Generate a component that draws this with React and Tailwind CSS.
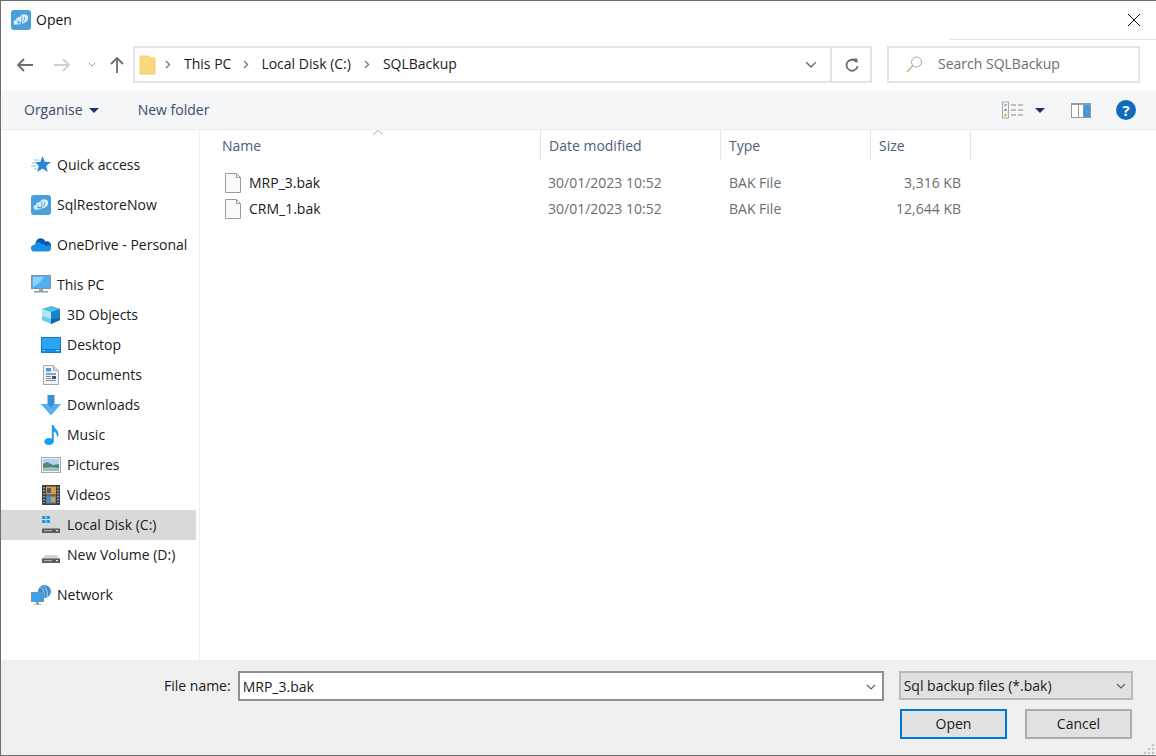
import React from "react";

const Logo = ({ s = 20 }) => (
  <svg width={s} height={s} viewBox="0 0 20 20" className="shrink-0">
    <rect width="20" height="20" rx="3" fill="#4a9fdc" />
    <path d="M3 14c-1-2 0-4 2-4 0-2 2-3 4-3 1-2 3-3 5-2.500 2 0 3.500 1.500 3 3.500 0 2-1 3.500-2.500 4-1 1.500-2.500 1.500-4 1-1.500 1.500-3 2-4 1.500-1.500 0-3 .5-3.500-.5z" fill="#dceffb" />
    <path d="M7 10l1 4.500M11 6.500l-.5 6M14 7l-1.500 5M6 12.500h5" stroke="#4a9fdc" strokeWidth="0.900" fill="none" />
  </svg>
);
const Star = () => (
  <svg width="20" height="20" viewBox="0 0 20 20" className="shrink-0">
    <path d="M11.500 1l2.200 5.700 6.300.3-4.900 3.900 1.700 6.100-5.300-3.500-5.300 3.500 1.700-6.100L4 7h5.300z" fill="#2a85d8" />
    <path d="M3 5h5M1 8h5M0 11h5M3 14h4" stroke="#8cc4ee" strokeWidth="1" />
  </svg>
);
const Cloud = () => (
  <svg width="20" height="14" viewBox="0 0 20 14" className="shrink-0">
    <path d="M5 7a5 5 0 0 1 9.500-3.500A4 4 0 0 1 19.500 9L10 9z" fill="#0a56ad" />
    <path d="M3.500 13.500a3.300 3.300 0 0 1-.4-6.600A4.800 4.800 0 0 1 11 6a3.500 3.500 0 0 1 4 2.500 2.800 2.800 0 0 1 5 2.500c-.4 1.500-1.500 2.500-3 2.500z" fill="#1c8fe3" />
  </svg>
);
const Monitor = ({ s = 20 }) => (
  <svg width={s} height={s} viewBox="0 0 20 20" className="shrink-0">
    <rect x="0.500" y="0.500" width="19" height="13" fill="#4fb0f2" stroke="#7f93a3" />
    <path d="M2 2h11L8 8l-6 4z" fill="#8fd0fa" />
    <rect x="8" y="14" width="4" height="2" fill="#9aa5ae" />
    <rect x="3" y="16" width="14" height="1.500" fill="#8e9aa4" />
  </svg>
);
const Cube = () => (
  <svg width="20" height="20" viewBox="0 0 20 20" className="shrink-0">
    <path d="M10 1l9 3v11l-9 4z" fill="#1b84c8" />
    <path d="M10 1L1 4v11l9 4z" fill="#aee8f8" />
    <path d="M1 4l9 3 9-3-9-3z" fill="#54bfe9" />
    <path d="M10 14l9-1v2l-9 4z" fill="#0d65a2" />
    <path d="M1 11l9 3v5l-9-4z" fill="#6dcdea" />
  </svg>
);
const Desktop = () => (
  <svg width="20" height="16" viewBox="0 0 20 16" className="shrink-0">
    <rect width="20" height="16" fill="#1179cf" />
    <rect x="1" y="1" width="18" height="11" fill="#2ba4f5" />
    <rect x="1" y="13" width="18" height="2" fill="#1a8ee4" />
    <rect x="15" y="13" width="3" height="1" fill="#cfe8f8" />
    <rect x="2" y="13" width="2" height="1" fill="#9fd4f7" />
  </svg>
);
const Docs = () => (
  <svg width="16" height="20" viewBox="0 0 16 20" className="shrink-0">
    <path d="M.5.500h10l5 5v14H.500z" fill="#f2f4f6" stroke="#a4a9ae" />
    <path d="M10.500.500v5h5" fill="#d8dcdf" stroke="#a4a9ae" />
    <path d="M3 3h5v3.500H3z" fill="#4f9bdc" />
    <path d="M3 9h10" stroke="#3a94dd" strokeWidth="1.500" />
    <path d="M3 11.500h5M3 13.500h5M3 15.500h10" stroke="#7e8a95" />
    <rect x="9" y="11" width="4" height="3" fill="#4a5560" />
  </svg>
);
const Down = () => (
  <svg width="20" height="20" viewBox="0 0 20 20" className="shrink-0">
    <path d="M6.500 0h7v9H20L10 20 0 9h6.500z" fill="#3a8fdb" />
    <path d="M10 20L0 9h6.500L10 13l3.500-4H20z" fill="#56aef0" />
  </svg>
);
const Note = () => (
  <svg width="15" height="20" viewBox="0 0 15 20" className="shrink-0">
    <ellipse cx="5" cy="16.500" rx="4.700" ry="3.500" fill="#1c9bef" />
    <path d="M7.800 0h2c.3 4 5 4.500 4.700 10l-1.500 2.500c.5-3-1.500-5.500-3.200-6V17H7.800z" fill="#1c9bef" />
  </svg>
);
const Pics = () => (
  <svg width="20" height="16" viewBox="0 0 20 16" className="shrink-0">
    <rect x="0.500" y="0.500" width="19" height="15" fill="#eef0f1" stroke="#a5abb0" />
    <rect x="2" y="2" width="16" height="12" fill="#aed6ef" />
    <path d="M2 7l4-2 6 3 6-1v7H2z" fill="#4f857d" />
    <path d="M2 11l8-1 8 1v3H2z" fill="#9ec3b5" />
  </svg>
);
const Film = () => (
  <svg width="18" height="20" viewBox="0 0 18 20" className="shrink-0">
    <rect width="18" height="20" fill="#3c4043" />
    <rect x="4" y="1.500" width="10" height="8" fill="#e09a3a" />
    <rect x="4" y="10.500" width="10" height="8" fill="#4b8ec0" />
    <rect x="5" y="3" width="4" height="5" fill="#38628a" />
    <rect x="9" y="12" width="4" height="5" fill="#dc9b3d" />
    <path d="M2 2v16M16 2v16" stroke="#aeb4b8" strokeWidth="1.500" strokeDasharray="1.500 1.500" />
  </svg>
);
const Drive = ({ win }) => (
  <svg width="18" height="20" viewBox="0 0 18 20" className="shrink-0">
    {win && (
      <g fill="#1a9bf0">
        <rect x="0" y="1" width="3.500" height="3" />
        <rect x="4.500" y="1" width="3.500" height="3" />
        <rect x="0" y="5" width="3.500" height="3" />
        <rect x="4.500" y="5" width="3.500" height="3" />
      </g>
    )}
    <path d="M3 10h12l3 4H0z" fill="#d2d5d7" />
    <rect x="0" y="13.500" width="18" height="4.500" rx="0.500" fill="#565b5f" />
    <rect x="2" y="15" width="8" height="1.200" fill="#a8adb0" />
    <rect x="14" y="15" width="2" height="1.200" fill="#e7ebee" />
  </svg>
);
const Net = () => (
  <svg width="21" height="21" viewBox="0 0 21 21" className="shrink-0">
    <circle cx="13.500" cy="6.500" r="6.500" fill="#3f8fd0" />
    <path d="M9 2c4 1 5 8 3 11M13 1c3 3 4 8 3 11" stroke="#b6dbf3" fill="none" />
    <rect x="0.500" y="7.500" width="12" height="9" fill="#35a5ef" stroke="#7892a6" />
    <rect x="5" y="17" width="3" height="2" fill="#8ea0ad" />
    <rect x="3" y="19" width="7" height="1" fill="#a9b5bd" />
  </svg>
);
const FileIcon = () => (
  <svg width="16" height="20" viewBox="0 0 16 20" className="shrink-0">
    <path d="M.5.500h11l4 4v15H.500z" fill="#fbfbfb" stroke="#9a9a9a" />
    <path d="M11.500.500v4h4" fill="none" stroke="#9a9a9a" />
  </svg>
);
const Chev = ({ c = "#6d6d6d", w = 12 }) => (
  <svg width={w} height={w * 0.6} viewBox="0 0 10 6" className="shrink-0">
    <path d="M1 1l4 4 4-4" fill="none" stroke={c} strokeWidth="1.200" />
  </svg>
);
const Crumb = () => (
  <svg width="6" height="9" viewBox="0 0 6 9" className="shrink-0">
    <path d="M1 1l3.500 3.500L1 8" fill="none" stroke="#7a7a7a" strokeWidth="1.400" />
  </svg>
);
const Tri = () => (
  <svg width="10" height="5" viewBox="0 0 10 5" className="shrink-0">
    <path d="M0 0h10L5 5z" fill="#1e3560" />
  </svg>
);

const Nav = ({ icon, label, indent, selected }) => (
  <div className={`flex h-[30px] w-[195px] items-center ${indent ? "pl-[40px]" : "pl-[30px]"} ${selected ? "bg-[#d9d9d9]" : ""}`}>
    <div className="flex w-[20px] shrink-0 justify-center">{icon}</div>
    <span className="ml-[6px] whitespace-nowrap text-[#1a1a1a]">{label}</span>
  </div>
);

const Row = ({ name, size }) => (
  <div className="flex h-[26px] items-center text-[#6d6d6d]">
    <div className="flex w-[327px] items-center pl-[11px]">
      <FileIcon />
      <span className="ml-[8px] text-[#1a1a1a]">{name}</span>
    </div>
    <div className="w-[181px] pl-[7px]">30/01/2023 10:52</div>
    <div className="w-[150px] pl-[7px]">BAK File</div>
    <div className="w-[89px] text-right">{size}</div>
  </div>
);

const Head = ({ w, children }) => (
  <div className={`flex h-[31px] items-center border-r border-[#e5e5e5] pl-[8px] text-[#4c607a] ${w}`}>{children}</div>
);

export default function App() {
  return (
    <div
      className="flex h-[756px] w-[1156px] flex-col overflow-hidden border-y border-l border-[#6e6e6e] bg-white text-[14px] leading-none"
      style={{ fontFamily: '"Open Sans", "Noto Sans", sans-serif' }}
    >
      {/* title */}
      <div className="flex h-[38px] shrink-0 items-center">
        <div className="ml-[10px]"><Logo /></div>
        <span className="ml-[5px] text-[#111]">Open</span>
        <svg width="12" height="12" viewBox="0 0 12 12" className="ml-auto mr-[16px]">
          <path d="M0 0l12 12M12 0L0 12" stroke="#111" strokeWidth="1" />
        </svg>
      </div>
      <div className="ml-auto h-px w-[206px] shrink-0 bg-[#e5e5e5]" />

      {/* address row */}
      <div className="flex h-[51px] shrink-0 items-start pt-[6px]">
        <div className="flex h-[37px] w-[132px] items-center">
          <svg width="16" height="14" viewBox="0 0 16 14" className="ml-[16px]">
            <path d="M7 1L1 7l6 6M1 7h15" fill="none" stroke="#6d6d6d" strokeWidth="1.800" />
          </svg>
          <svg width="16" height="14" viewBox="0 0 16 14" className="ml-[21px]">
            <path d="M9 1l6 6-6 6M15 7H0" fill="none" stroke="#d0d0d0" strokeWidth="1.800" />
          </svg>
          <div className="ml-[18px]"><Chev c="#9a9a9a" w={8} /></div>
          <svg width="14" height="16" viewBox="0 0 14 16" className="ml-[14px]">
            <path d="M1 7l6-6 6 6M7 1v15" fill="none" stroke="#6d6d6d" strokeWidth="1.800" />
          </svg>
        </div>
        <div className="flex h-[37px] w-[739px] items-center border-2 border-[#e4e4e4] text-[#1a1a1a]">
          <svg width="17" height="20" viewBox="0 0 17 20" className="ml-[4px]">
            <path d="M1 1h9l1 2h5v16H1z" fill="#fbd87f" stroke="#f0c860" strokeWidth="0.800" />
          </svg>
          <div className="ml-[9px]"><Crumb /></div>
          <span className="ml-[13px] pb-[2px]">This PC</span>
          <div className="ml-[12px]"><Crumb /></div>
          <span className="ml-[12px] pb-[2px]">Local Disk (C:)</span>
          <div className="ml-[13px]"><Crumb /></div>
          <span className="ml-[13px] pb-[2px]">SQLBackup</span>
          <div className="ml-auto flex items-center self-stretch">
            <Chev />
            <div className="ml-[13px] flex h-full w-[40px] items-center justify-center border-l-2 border-[#e4e4e4] pl-[2px]">
              <svg width="14" height="15" viewBox="0 0 14 15">
                <path d="M11.500 5A5.500 5.500 0 1 0 12.500 9" fill="none" stroke="#6d6d6d" strokeWidth="1.800" />
                <path d="M7 1.500h5.500v4.500z" fill="#6d6d6d" />
              </svg>
            </div>
          </div>
        </div>
        <div className="ml-[15px] flex h-[37px] w-[253px] items-center border-2 border-[#e4e4e4] text-[#6d6d6d]">
          <svg width="17" height="17" viewBox="0 0 17 17" className="ml-[17px]">
            <circle cx="10.500" cy="6" r="5" fill="none" stroke="#a8a8a8" strokeWidth="1" />
            <path d="M7 9.500L1 16" stroke="#d0b078" strokeWidth="1.500" />
          </svg>
          <span className="ml-[15px] pb-[2px]">Search SQLBackup</span>
        </div>
      </div>

      {/* toolbar */}
      <div className="flex h-[39px] shrink-0 items-center border-b border-[#e9ecef] bg-[#f5f6f7] text-[#3a4a6b]">
        <span className="ml-[23px]">Organise</span>
        <div className="ml-[6px]"><Tri /></div>
        <span className="ml-[39px]">New folder</span>
        <svg width="22" height="18" viewBox="0 0 22 18" className="ml-auto">
          <rect x="0.500" y="1" width="6" height="16" fill="#f2f2f2" stroke="#a9a9a9" />
          <rect x="2.500" y="3" width="2" height="2" fill="#7ba6d0" />
          <rect x="2.500" y="8" width="2" height="2" fill="#8a8a8a" />
          <rect x="2.500" y="13" width="2" height="2" fill="#dc9b3d" />
          <path d="M9 4h5M16 4h5M9 9h5M16 9h5M9 14h5M16 14h5" stroke="#8a8a8a" />
        </svg>
        <div className="ml-[11px]"><Tri /></div>
        <svg width="20" height="15" viewBox="0 0 20 15" className="ml-[26px]">
          <rect width="20" height="15" fill="#9a9a9a" />
          <rect x="1" y="2" width="6" height="12" fill="#fff" />
          <rect x="8" y="2" width="4" height="12" fill="#fff" />
          <rect x="13" y="2" width="6" height="12" fill="#3f9be0" />
        </svg>
        <div className="ml-[25px] mr-[20px] flex h-[20px] w-[20px] items-center justify-center rounded-full bg-[#0f6cbd] text-[15px] font-bold text-white">?</div>
      </div>

      {/* main */}
      <div className="flex min-h-0 flex-1">
        <div className="flex w-[199px] shrink-0 flex-col border-r border-[#f0f0f0] pt-[20px]">
          <div className="flex flex-col gap-[10px]">
            <Nav icon={<Star />} label="Quick access" />
            <Nav icon={<Logo />} label="SqlRestoreNow" />
            <Nav icon={<Cloud />} label="OneDrive - Personal" />
            <div className="flex flex-col">
              <Nav icon={<Monitor />} label="This PC" />
              <Nav indent icon={<Cube />} label="3D Objects" />
              <Nav indent icon={<Desktop />} label="Desktop" />
              <Nav indent icon={<Docs />} label="Documents" />
              <Nav indent icon={<Down />} label="Downloads" />
              <Nav indent icon={<Note />} label="Music" />
              <Nav indent icon={<Pics />} label="Pictures" />
              <Nav indent icon={<Film />} label="Videos" />
              <Nav indent selected icon={<Drive win />} label="Local Disk (C:)" />
              <Nav indent icon={<Drive />} label="New Volume (D:)" />
            </div>
            <Nav icon={<Net />} label="Network" />
          </div>
        </div>
        <div className="relative ml-[14px] flex min-w-0 flex-1 flex-col">
          <svg width="10" height="5" viewBox="0 0 10 5" className="absolute left-[159px] top-0">
            <path d="M0 4.500l5-4 5 4" fill="none" stroke="#b0b0b0" />
          </svg>
          <div className="flex">
            <Head w="w-[327px]">Name</Head>
            <Head w="w-[180px]">Date modified</Head>
            <Head w="w-[150px]">Type</Head>
            <Head w="w-[100px]">Size</Head>
          </div>
          <div className="mt-[9px] flex flex-col">
            <Row name="MRP_3.bak" size="3,316 KB" />
            <Row name="CRM_1.bak" size="12,644 KB" />
          </div>
        </div>
      </div>

      {/* footer */}
      <div className="relative flex h-[95px] shrink-0 flex-col bg-[#f0f0f0] text-[#1a1a1a]">
        <div className="mt-[11px] flex items-start">
          <span className="ml-[163px] mt-[8px]">File name:</span>
          <div className="ml-[7px] flex h-[30px] w-[646px] items-center border-2 border-[#8f8f8f] bg-white pl-[3px] pt-[1px]">
            MRP_3.bak
            <div className="ml-auto mr-[6px]"><Chev c="#606060" w={10} /></div>
          </div>
          <div className="ml-[15px] flex h-[29px] w-[234px] items-center border-2 border-[#bababa] bg-[#e1e1e1] pl-[3px] pt-[1px]">
            Sql backup files (*.bak)
            <div className="ml-auto mr-[5px]"><Chev c="#606060" w={10} /></div>
          </div>
        </div>
        <div className="mt-[8px] flex justify-end pr-[24px]">
          <button className="flex h-[30px] w-[107px] items-center justify-center border-2 border-[#0078d7] bg-[#e1e1e1]">Open</button>
          <button className="ml-[18px] flex h-[30px] w-[107px] items-center justify-center border-2 border-[#adadad] bg-[#e1e1e1]">Cancel</button>
        </div>
        <svg width="10" height="10" viewBox="0 0 10 10" className="absolute bottom-[1px] right-[2px]">
          <path d="M8 0h2v2H8zM4 4h2v2H4zM8 4h2v2H8zM0 8h2v2H0zM4 8h2v2H4zM8 8h2v2H8z" fill="#c4c4c4" />
        </svg>
      </div>
    </div>
  );
}
